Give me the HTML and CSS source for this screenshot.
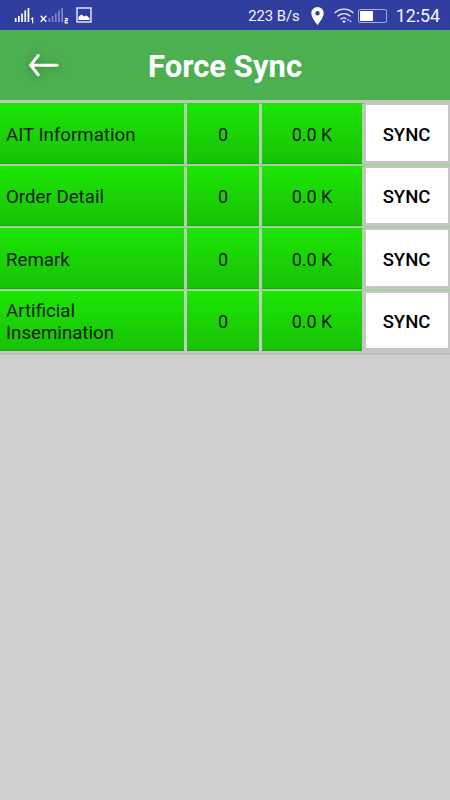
FILE: index.html
```
<!DOCTYPE html>
<html lang="en">
<head>
  <meta charset="UTF-8">
  <meta name="viewport" content="width=device-width, initial-scale=1.0">
  <title>Force Sync</title>
  <link rel="stylesheet" href="styles.css">
</head>
<body>
  <!-- Status Bar -->
  <div class="status-bar">
    <svg class="signal" width="21" height="18" viewBox="0 0 21 18" fill="#fff">
      <path d="M.8 12h1.700v4H.8zM4 10h1.700v6H4zM7.200 7.500h1.700v8.500H7.200zM10.400 4.500h1.700v11.500h-1.700zM13.600 2h1.700v14h-1.700z"/>
      <path d="M17 13.200l1.600-1v5" fill="none" stroke="#fff" stroke-width="1.200"/>
    </svg>
    <svg class="signal-off" width="30" height="18" viewBox="0 0 30 18" fill="#7d86cc">
      <path d="M.7 9.800l5.600 6M6.300 9.800L.7 15.800" stroke="#fff" stroke-width="1.300"/>
      <path d="M8.500 12h1.700v4H8.500zM11.700 10h1.700v6h-1.700zM14.900 7.500h1.700v8.500h-1.700zM18.100 4.500h1.700v11.500h-1.700zM21.300 2H23v14h-1.700z"/>
      <path d="M24.800 12.700h2.400v2h-1.900v2.100h2.700" fill="none" stroke="#fff" stroke-width="1.200"/>
    </svg>
    <svg class="picture" width="16" height="16" viewBox="0 0 16 16">
      <path d="M1 1h14v14H1z" fill="none" stroke="#dfe2f7" stroke-width="1.500"/>
      <path d="M2.500 13V9.800l3-2.300 2.500 2 2.500-1 3 2.500v2z" fill="#fff"/>
    </svg>
    <span class="speed">223 B/s</span>
    <svg class="pin" width="13" height="18" viewBox="0 0 13 18">
      <path d="M6.500 0A6.200 6.200 0 0 0 .3 6.200C.3 10.800 6.500 18 6.500 18s6.200-7.200 6.200-11.800A6.200 6.200 0 0 0 6.500 0zm0 8.400a2.200 2.200 0 1 1 0-4.400 2.200 2.200 0 0 1 0 4.400z" fill="#fff"/>
    </svg>
    <svg class="wifi" width="20" height="16" viewBox="0 0 20 16" fill="none" stroke="#eef" stroke-width="1.400">
      <path d="M.7 5C6-.2 14-.2 19.300 5M3.500 8.300c3.800-3.600 9.200-3.600 13 0M6.500 11.300c1.800-1.600 4-1.700 5.800-.7"/>
      <path d="M8 12.800h4l-2 2.200z" fill="#fff" stroke="none"/>
      <path d="M12.800 11.500h2.600l-1.300 1.600zM15.300 13.800h2.600L16.600 12.200z" fill="#fff" stroke="none"/>
    </svg>
    <div class="battery"><div class="battery-level"></div></div>
    <span class="clock">12:54</span>
  </div>

  <header>
    <svg class="back" width="32" height="26" viewBox="0 0 32 26" fill="none" stroke="#fff" stroke-width="3" stroke-linecap="round" stroke-linejoin="round">
      <path d="M29 13.200H2.700M10.200 3.500L2.700 13.200l7.500 9.500"/>
    </svg>
    <h1>Force Sync</h1>
  </header>

  <!-- Sync Table -->
  <main class="sync-table">
    <div class="row">
      <div class="cell name">AIT Information</div>
      <div class="cell">0</div>
      <div class="cell">0.0 K</div>
      <button class="sync-button">SYNC</button>
    </div>
    <div class="row">
      <div class="cell name">Order Detail</div>
      <div class="cell">0</div>
      <div class="cell">0.0 K</div>
      <button class="sync-button">SYNC</button>
    </div>
    <div class="row">
      <div class="cell name">Remark</div>
      <div class="cell">0</div>
      <div class="cell">0.0 K</div>
      <button class="sync-button">SYNC</button>
    </div>
    <div class="row">
      <div class="cell name">Artificial<br>Insemination</div>
      <div class="cell">0</div>
      <div class="cell">0.0 K</div>
      <button class="sync-button">SYNC</button>
    </div>
  </main>
</body>
</html>
```
FILE: styles.css
```
* {
  margin: 0;
  padding: 0;
  box-sizing: border-box;
}
body {
  font-family: Roboto, sans-serif;
  background: #d0d0d0;
  color: #081c05;
  height: 100vh;
  overflow: hidden;
}
.status-bar {
  display: flex;
  align-items: center;
  height: 30px;
  padding: 1px 10px 0 14px;
  background: #303f9f;
  color: #f4f5ff;
}
.signal,
.signal-off {
  margin-bottom: 2px;
}
.signal-off {
  margin-left: 5px;
}
.picture {
  margin: 0 0 1px 6px;
}
.speed {
  margin-left: auto;
  font-size: 14.8px;
}
.pin {
  margin-left: 11px;
}
.wifi {
  margin-left: 10px;
}
.battery {
  width: 29px;
  height: 14px;
  margin-left: 4px;
  padding: 1px;
  border: 1px solid #a4ace0;
  border-radius: 2px;
}
.battery-level {
  width: 13px;
  height: 10px;
  background: #fff;
}
.clock {
  margin-left: 9px;
  font-size: 17.8px;
}
header {
  display: grid;
  grid-template-columns: 64px 1fr 64px;
  align-items: center;
  height: 70px;
  background: #4caf50;
  color: #fff;
}
.back {
  margin: 0 0 1px 28px;
  filter: drop-shadow(0 1px 4px rgba(0, 60, 0, 0.4));
}
header h1 {
  padding-top: 3px;
  font-size: 31px;
  font-weight: 700;
  text-align: center;
}
.sync-table {
  height: 255px;
  padding-top: 3px;
  background: #c0c8be;
  border-bottom: 2px solid #bebebe;
}
.row {
  display: grid;
  grid-template-columns: 184px 72px 100px 85px;
  column-gap: 3px;
  height: 62.5px;
  padding-bottom: 2px;
  background: linear-gradient(#62d958 1px, #b4cfaf 1px, #b4cfaf 60px, #a0d498 60px);
}
.row:last-child {
  background: #c4c9c3;
}
.cell {
  display: flex;
  align-items: center;
  justify-content: center;
  padding-top: 4px;
  background: linear-gradient(#1ce603, #18c207);
  border-bottom: 1px solid #15a90a;
  font-size: 18px;
  line-height: 22px;
}
.cell.name {
  justify-content: flex-start;
  padding-left: 6px;
  font-size: 18.7px;
}
.sync-button {
  border: solid #c5c5c5;
  border-width: 2px 2px 3px 1px;
  background: #fff;
  color: #000;
  font-family: inherit;
  font-size: 18.5px;
  font-weight: 500;
  padding: 4px 1px 0 0;
}
```
